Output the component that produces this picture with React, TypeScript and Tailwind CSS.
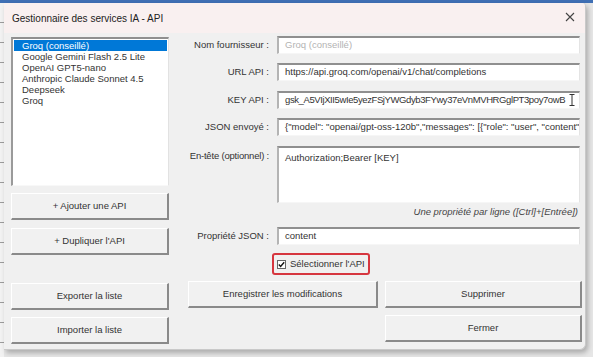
import React from "react";

const PROVIDERS = [
  "Groq (conseillé)",
  "Google Gemini Flash 2.5 Lite",
  "OpenAI GPT5-nano",
  "Anthropic Claude Sonnet 4.5",
  "Deepseek",
  "Groq",
];

function WinButton({ children, className = "" }: { children: React.ReactNode; className?: string }) {
  return (
    <button
      type="button"
      className={`flex h-[27px] items-center justify-center border-t border-l border-b-2 border-r-2 border-t-white border-l-white border-b-[#8a8a8a] border-r-[#8a8a8a] bg-[#f1f1f1] text-[9.5px] text-[#333] ${className}`}
    >
      {children}
    </button>
  );
}

function Field({
  label,
  value,
  muted,
  className = "",
  valueClassName = "",
}: {
  label: string;
  value: string;
  muted?: boolean;
  className?: string;
  valueClassName?: string;
}) {
  return (
    <div className={`flex h-[18px] items-center ${className}`}>
      <div className="w-[82px] whitespace-nowrap pr-[1px] text-right text-[9.5px] text-[#333]">{label}</div>
      <div className="ml-[7px] flex h-[18px] w-[303px] items-center overflow-hidden whitespace-nowrap border-t-2 border-l-2 border-b border-r border-t-[#8f8f8f] border-l-[#b4b4b4] border-b-[#f6f6f6] border-r-[#e4e4e4] bg-white pl-[6px] text-[9.5px]">
        <span className={`${muted ? "text-[#b3b3b3]" : "text-[#333]"} ${valueClassName}`}>{value}</span>
      </div>
    </div>
  );
}

export default function App() {
  return (
    <div className="h-[357px] w-[593px] overflow-hidden bg-[#e6e6e6] font-['Liberation_Sans',Arial,sans-serif]">
      <div className="h-[3px] bg-[#3f6fb4]" />
      <div className="flex">
        <div className="h-[354px] w-[4px] bg-[repeating-linear-gradient(to_bottom,#f2f2f2_0px,#f2f2f2_19px,#9c9c9c_19px,#9c9c9c_20px)]" />
        <div className="h-[347px] w-[582px] overflow-hidden rounded-br-[6px] rounded-tr-[4px] border-r border-b border-[#c9c9c9] bg-[#f0f0f0] shadow-[2px_3px_5px_rgba(0,0,0,0.25)]">
          {/* title bar */}
          <div className="flex h-[30px] items-center justify-between bg-[#f9f0f0] pl-[8px] pr-[10px]">
            <span className="text-[10px] text-[#222]">Gestionnaire des services IA - API</span>
            <svg width="10" height="10" viewBox="0 0 10 10" className="mb-[2px]">
              <path d="M1 1 L9 9 M9 1 L1 9" stroke="#444" strokeWidth="1.1" />
            </svg>
          </div>

          <div className="flex pl-[7px] pt-[3px]">
            {/* left column */}
            <div className="flex w-[158px] flex-col">
              <div className="mt-[1px] h-[149px] border-t-2 border-l-2 border-b border-r border-t-[#8f8f8f] border-l-[#9a9a9a] border-b-[#f8f8f8] border-r-[#e2e2e2] bg-white pt-[1px] text-[9.5px] leading-[11px] text-[#333]">
                {PROVIDERS.map((p, i) => (
                  <div
                    key={i}
                    className={i === 0 ? "mx-[1px] bg-[#0078d7] pl-[8px] text-white" : "pl-[9px]"}
                  >
                    {p}
                  </div>
                ))}
              </div>
              <WinButton className="mt-[7px] h-[26px]">+ Ajouter une API</WinButton>
              <WinButton className="mt-[8px] h-[26px]">+ Dupliquer l'API</WinButton>
              <WinButton className="mt-[28px]">Exporter la liste</WinButton>
              <WinButton className="mt-[7px]">Importer la liste</WinButton>
            </div>

            {/* right column */}
            <div className="ml-[19px] flex w-[394px] flex-col">
              <Field label="Nom fournisseur :" value="Groq (conseillé)" muted />
              <Field className="mt-[9px]" label="URL API :" value="https://api.groq.com/openai/v1/chat/completions" />
              <div className="relative">
                <Field
                  className="mt-[10px]"
                  label="KEY API :"
                  value="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"
                  valueClassName="tracking-[-0.4px]"
                />
                <svg width="6" height="12" viewBox="0 0 6 12" className="absolute right-[7px] top-[13px]">
                  <path d="M0.5 0.5 H5.5 M3 0.5 V11.5 M0.5 11.5 H5.5" stroke="#333" strokeWidth="1" fill="none" />
                </svg>
              </div>
              <Field
                className="mt-[9px]"
                label="JSON envoyé :"
                value={'{"model": "openai/gpt-oss-120b","messages": [{"role": "user", "content": "[PROMPT]"}]}'}
              />
              <div className="mt-[10px] flex">
                <div className="w-[82px] whitespace-nowrap pr-[1px] pt-[3px] text-right text-[9.5px] tracking-[-0.2px] text-[#333]">
                  En-tête (optionnel) :
                </div>
                <div className="ml-[7px] h-[57px] w-[303px] border-t-2 border-l-2 border-b border-r border-t-[#8f8f8f] border-l-[#b4b4b4] border-b-[#f6f6f6] border-r-[#e4e4e4] bg-white pl-[6px] pt-[3px] text-[9.5px] text-[#333]">
                  Authorization;Bearer [KEY]
                </div>
              </div>
              <div className="mt-[3px] h-[11px] pr-[4px] text-right text-[9.5px] italic leading-[11px] text-[#444]">
                Une propriété par ligne ([Ctrl]+[Entrée])
              </div>
              <Field className="mt-[10px]" label="Propriété JSON :" value="content" />
              <div className="mt-[8px] flex">
                <div className="ml-[84px] flex h-[22px] w-[98px] items-center rounded-[3px] border-2 border-[#d6363f] pl-[3px]">
                  <div className="flex h-[9px] w-[9px] items-center justify-center border border-[#666] bg-white">
                    <svg width="7" height="7" viewBox="0 0 7 7">
                      <path d="M0.8 3.6 L2.6 5.4 L6.2 1.2" stroke="#111" strokeWidth="1.4" fill="none" />
                    </svg>
                  </div>
                  <span className="ml-[4px] text-[9.5px] text-[#333]">Sélectionner l'API</span>
                </div>
              </div>
              <div className="mt-[6px] flex">
                <WinButton className="w-[190px]">Enregistrer les modifications</WinButton>
                <WinButton className="ml-[7px] w-[197px]">Supprimer</WinButton>
              </div>
              <div className="mt-[7px] flex">
                <WinButton className="ml-[197px] w-[197px]">Fermer</WinButton>
              </div>
            </div>
          </div>
        </div>
      </div>
    </div>
  );
}
